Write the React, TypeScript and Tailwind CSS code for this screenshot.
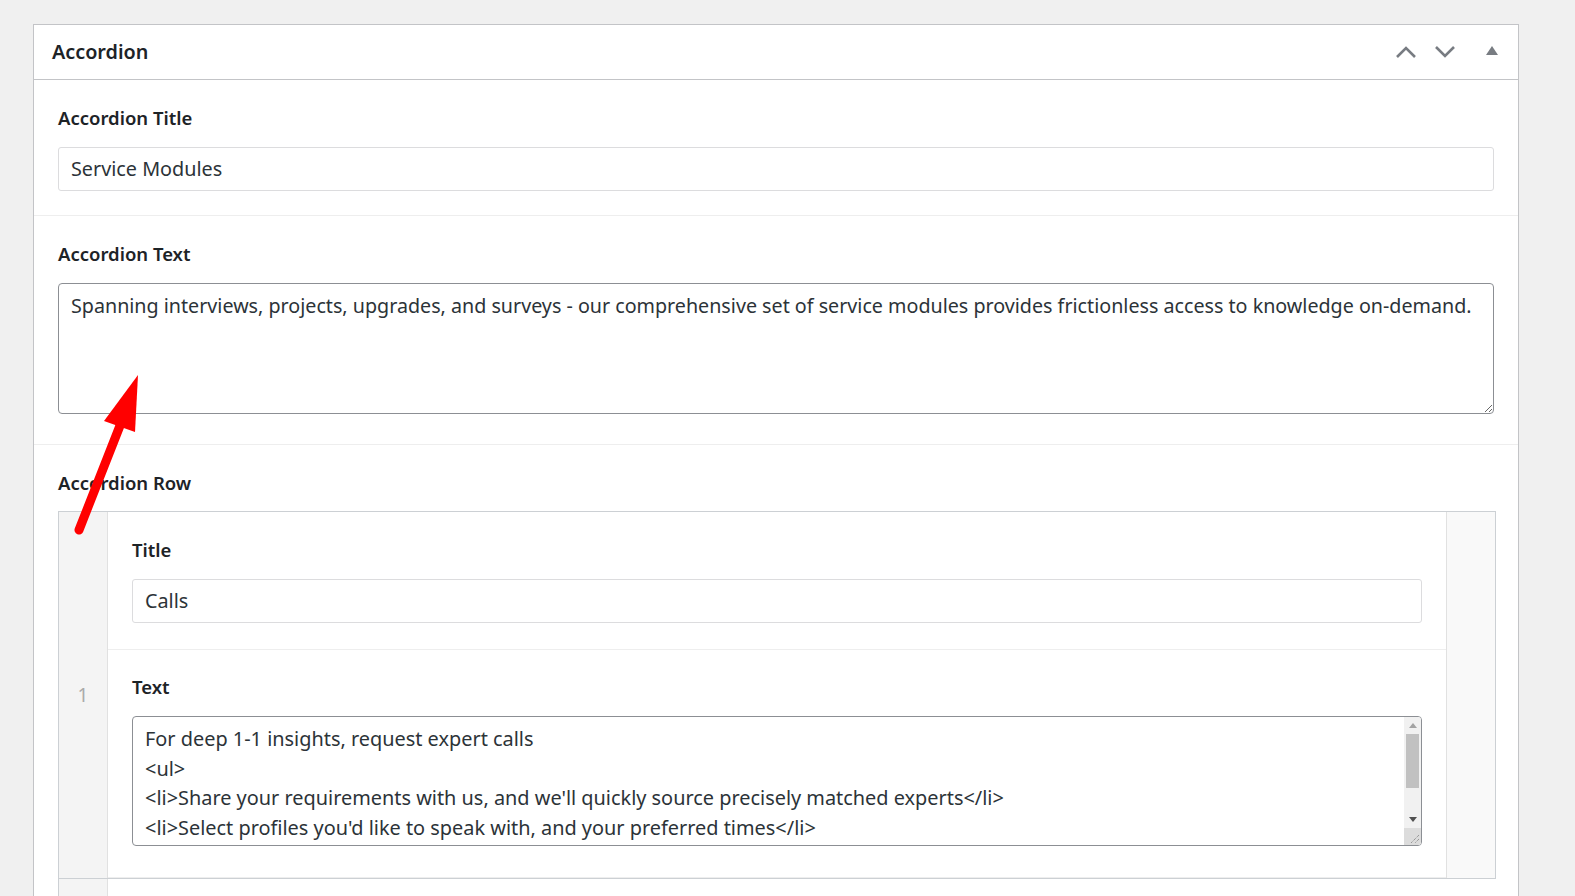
import React from "react";

const font = "font-['Noto_Sans','Open_Sans',sans-serif]";

const Label = ({ children, mb = "mb-[15px]" }: { children: React.ReactNode; mb?: string }) => (
  <div className={`text-[18.5px] leading-[28px] font-semibold text-[#1d2327] ${mb}`}>
    {children}
  </div>
);

const TextInput = ({ value }: { value: string }) => (
  <div className="h-[44px] border border-[#dcdcde] rounded-[3px] bg-white px-[12px] flex items-center text-[19.8px] text-[#2c3338]">
    {value}
  </div>
);

const Grip = () => (
  <svg width="10" height="10" viewBox="0 0 10 10" className="block">
    <path d="M9 1 L1 9 M9 5 L5 9" stroke="#7a7a7a" strokeWidth="1" strokeDasharray="1 1" />
  </svg>
);

const ScrollTextArea = ({ lines }: { lines: string[] }) => (
  <div className="relative h-[130px] border border-[#8c8f94] rounded-[4px] bg-white overflow-hidden">
    <div className="pl-[12px] pt-[7px] pr-[30px] text-[19.9px] leading-[29.5px] text-[#2c3338] whitespace-pre">
      {lines.map((l, i) => (
        <div key={i}>{l}</div>
      ))}
    </div>
    {/* fake scrollbar */}
    <div className="absolute top-0 right-0 bottom-0 w-[17px] bg-[#f1f1f1] flex flex-col">
      <div className="h-[17px] flex items-center justify-center">
        <svg width="8" height="5" viewBox="0 0 8 5">
          <path d="M0 5 L4 0 L8 5 Z" fill="#a3a3a3" />
        </svg>
      </div>
      <div className="h-[54px] mx-[2px] bg-[#c1c1c1]" />
      <div className="flex-1" />
      <div className="h-[17px] flex items-center justify-center">
        <svg width="8" height="5" viewBox="0 0 8 5">
          <path d="M0 0 L4 5 L8 0 Z" fill="#505050" />
        </svg>
      </div>
      <div className="h-[17px] bg-[#dcdcdc] flex items-end justify-end pr-[1px] pb-[1px]">
        <Grip />
      </div>
    </div>
  </div>
);

export default function App() {
  return (
    <div className={`relative h-[896px] overflow-hidden bg-[#f0f0f0] pt-[24px] pl-[33px] ${font}`}>
      <div className="w-[1486px] border border-[#c3c4c7] bg-white">
        {/* header */}
        <div className="h-[55px] border-b border-[#c3c4c7] flex items-center pl-[18px] pr-[20px]">
          <div className="text-[19.8px] font-semibold text-[#1d2327] flex-1">Accordion</div>
          <div className="flex items-center">
            <svg width="22" height="14" viewBox="0 0 22 14" className="mr-[17px]">
              <polyline points="2,12 11,3 20,12" fill="none" stroke="#787c82" strokeWidth="2.6" />
            </svg>
            <svg width="22" height="14" viewBox="0 0 22 14" className="mr-[30px]">
              <polyline points="2,2 11,11 20,2" fill="none" stroke="#787c82" strokeWidth="2.6" />
            </svg>
            <svg width="12" height="10" viewBox="0 0 12 10" className="-mt-[3px]">
              <path d="M0 9 L6 0 L12 9 Z" fill="#787c82" />
            </svg>
          </div>
        </div>

        {/* Accordion Title */}
        <div className="px-[24px] pt-[24px] pb-[24px] border-b border-[#eeeeee]">
          <Label>Accordion Title</Label>
          <TextInput value="Service Modules" />
        </div>

        {/* Accordion Text */}
        <div className="px-[24px] pt-[24px] pb-[30px] border-b border-[#eeeeee]">
          <Label>Accordion Text</Label>
          <textarea
            readOnly
            value="Spanning interviews, projects, upgrades, and surveys - our comprehensive set of service modules provides frictionless access to knowledge on-demand."
            className="block w-full h-[131px] border border-[#8c8f94] rounded-[4px] px-[12px] py-[7px] text-[19.7px] leading-[29.5px] text-[#2c3338] outline-none"
          />
        </div>

        {/* Accordion Row */}
        <div className="pl-[24px] pr-[22px] pt-[24px]">
          <Label mb="mb-[14px]">Accordion Row</Label>
          <div className="border border-[#ccd0d4] flex">
            <div className="w-[49px] bg-[#f4f4f4] border-r border-[#e1e1e1] flex items-center justify-center text-[19px] text-[#aaaaaa]">
              1
            </div>
            <div className="flex-1">
              <div className="px-[24px] pt-[24px] pb-[26px] border-b border-[#eeeeee]">
                <Label>Title</Label>
                <TextInput value="Calls" />
              </div>
              <div className="px-[24px] pt-[23px] pb-[31px] border-b border-[#eeeeee]">
                <Label>Text</Label>
                <ScrollTextArea
                  lines={[
                    "For deep 1-1 insights, request expert calls",
                    "<ul>",
                    "<li>Share your requirements with us, and we'll quickly source precisely matched experts</li>",
                    "<li>Select profiles you'd like to speak with, and your preferred times</li>",
                  ]}
                />
              </div>
            </div>
            <div className="w-[49px] bg-[#f9f9f9] border-l border-[#e1e1e1]" />
          </div>
          <div className="flex h-[60px]">
            <div className="w-[50px] bg-[#f4f4f4] border-l border-[#ccd0d4] border-r border-r-[#e1e1e1]" />
          </div>
        </div>
      </div>

      {/* red annotation arrow */}
      <svg className="absolute left-0 top-0 pointer-events-none" width="1575" height="896">
        <line x1="79" y1="530" x2="123" y2="418" stroke="#ff0000" strokeWidth="9" strokeLinecap="round" />
        <path d="M138 375 L104 421 L135 432 Z" fill="#ff0000" />
      </svg>
    </div>
  );
}
